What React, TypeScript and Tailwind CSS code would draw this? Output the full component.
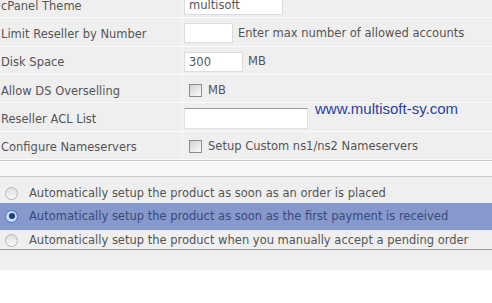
import React, { useState } from "react";

const rows = [
  { label: "cPanel Theme", key: "theme" },
  { label: "Limit Reseller by Number", key: "limit" },
  { label: "Disk Space", key: "disk" },
  { label: "Allow DS Overselling", key: "oversell" },
  { label: "Reseller ACL List", key: "acl" },
  { label: "Configure Nameservers", key: "ns" },
];

const setupOptions = [
  { text: "Automatically setup the product as soon as an order is placed", height: "h-[26px] pt-[7px]" },
  { text: "Automatically setup the product as soon as the first payment is received", height: "h-[27px]" },
  { text: "Automatically setup the product when you manually accept a pending order", height: "h-[19px] pt-[2px]" },
];

const Checkbox: React.FC = () => (
  <span className="inline-block h-[13px] w-[13px] border border-[#8c8c8c] bg-gradient-to-br from-[#d2d2d2] to-[#fbfbfb]" />
);

const Radio: React.FC<{ checked: boolean }> = ({ checked }) => (
  <span
    className={
      checked
        ? "flex h-[13px] w-[13px] items-center justify-center rounded-full border border-[#3f6fc0] bg-[#cddbf2]"
        : "flex h-[13px] w-[13px] items-center justify-center rounded-full border border-[#b4b4b4] bg-gradient-to-b from-[#dedede] to-[#fafafa]"
    }
  >
    {checked && <span className="h-[6px] w-[6px] rounded-full bg-[#1b3f80]" />}
  </span>
);

const App: React.FC = () => {
  const [selected, setSelected] = useState(1);

  const renderValue = (key: string) => {
    switch (key) {
      case "theme":
        return <div className="h-[20px] w-[99px] border border-[#dcdcdc] bg-white pl-[4px] leading-[18px]">multisoft</div>;
      case "limit":
        return (
          <div className="flex items-center gap-[5px]">
            <div className="h-[20px] w-[49px] border border-[#dcdcdc] bg-white" />
            <span>Enter max number of allowed accounts</span>
          </div>
        );
      case "disk":
        return (
          <div className="flex items-center gap-[5px]">
            <div className="h-[20px] w-[59px] border border-[#dcdcdc] bg-white pl-[4px] leading-[18px]">300</div>
            <span>MB</span>
          </div>
        );
      case "oversell":
        return (
          <div className="flex items-center gap-[6px] pl-[5px]">
            <Checkbox />
            <span>MB</span>
          </div>
        );
      case "acl":
        return (
          <div className="flex items-start">
            <div className="mt-[1px] h-[21px] w-[124px] border border-[#e0e0e0] border-t-[#9a9a9a] bg-white" />
            <span className="-mt-[7px] ml-[7px] font-['Liberation_Sans',sans-serif] text-[15px] leading-[18px] text-[#2b3fa0]">
              www.multisoft-sy.com
            </span>
          </div>
        );
      case "ns":
        return (
          <div className="flex items-center gap-[6px] pl-[5px]">
            <Checkbox />
            <span>Setup Custom ns1/ns2 Nameservers</span>
          </div>
        );
      default:
        return null;
    }
  };

  return (
    <div className="h-[303px] w-[492px] overflow-hidden bg-white font-['DejaVu_Sans',sans-serif] text-[11.5px] text-[#555]">
      <div className="-mt-[10px] bg-[#efefef]">
        {rows.map((row) => (
          <div key={row.key} className="flex h-[28.33px] items-center border-b border-[#fafafa]">
            <div className="flex h-full w-[183px] items-center border-r border-[#f8f8f8] pt-[5px] pl-[1px]">{row.label}</div>
            <div className="flex h-full flex-1 items-center pt-[3px] pl-[1px]">{renderValue(row.key)}</div>
          </div>
        ))}
      </div>

      <div className="h-[17px] border-y border-[#c9c9c9] bg-[#f7f7f7]" />

      <div className="bg-[#efefef]">
        {setupOptions.map((opt, i) => (
          <div
            key={opt.text}
            onClick={() => setSelected(i)}
            className={
              i === selected
                ? `flex ${opt.height} items-center gap-[11px] bg-[#8698cc] pl-[5px] text-[#3b4a78]`
                : `flex ${opt.height} items-center gap-[11px] pl-[5px]`
            }
          >
            <Radio checked={i === selected} />
            <span>{opt.text}</span>
          </div>
        ))}
        <div className="h-[21px] border-t border-[#9c9c9c] bg-[#efefef]" />
      </div>
    </div>
  );
};

export default App;
